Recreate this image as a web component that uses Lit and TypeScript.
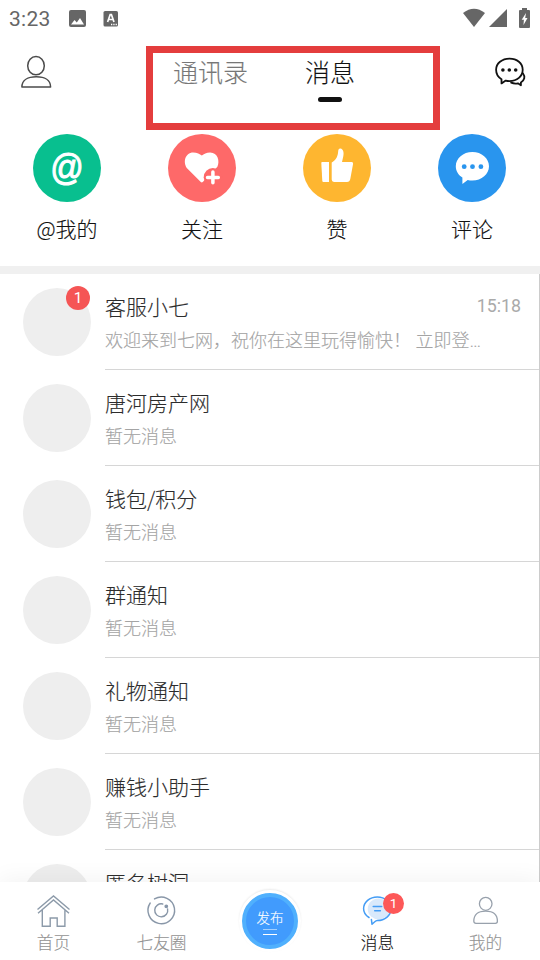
import { LitElement, html, css, svg, nothing } from "lit";
import { customElement, property } from "lit/decorators.js";

interface Conversation {
  name: string;
  preview: string;
  time?: string;
  unread?: number;
}

const conversations: Conversation[] = [
  { name: "客服小七", preview: "欢迎来到七网，祝你在这里玩得愉快！ 立即登…", time: "15:18", unread: 1 },
  { name: "唐河房产网", preview: "暂无消息" },
  { name: "钱包/积分", preview: "暂无消息" },
  { name: "群通知", preview: "暂无消息" },
  { name: "礼物通知", preview: "暂无消息" },
  { name: "赚钱小助手", preview: "暂无消息" },
  { name: "匿名树洞", preview: "暂无消息" },
];

const heartIcon = html`<svg width="68" height="68" viewBox="0 0 68 68">
  <path fill="#fff" d="M32.800 48 19.800 35C14.200 29 17 18.400 25.200 18.400c4 0 6.600 1.400 8.600 3.200 2-1.800 4.600-3.200 8.400-3.200 7.600 0 9.800 8.600 7.200 14.400L34.800 47.900q-1 .9-2 .1z"/>
  <circle cx="44.900" cy="43.300" r="9.200" fill="#fe6969"/>
  <path d="M44.900 38v10.800M39.500 43.400h10.800" stroke="#fff" stroke-width="3.500" stroke-linecap="round"/>
</svg>`;

const thumbIcon = html`<svg width="68" height="68" viewBox="0 0 68 68" fill="#fff">
  <path d="M19 28h7v20h-5.600q-1 0-1.100-1L18.300 29q0-1 .7-1z"/>
  <path d="M28.700 28.600c3.500-2.100 6-5.300 6.400-10.600.1-2.500 1-3.600 2.300-3.400 3 .5 3.700 4.300 2.900 7.700L39 28h9.700q1.600 0 1.400 1.700L47.300 45q-.6 3-3.300 3H31q-2.300-.2-2.300-2.500z"/>
</svg>`;

const commentIcon = html`<svg width="68" height="68" viewBox="0 0 68 68">
  <path fill="#fff" d="M34.400 18c9.300 0 16.600 6.300 16.600 14.200s-7.300 14.300-16.600 14.300c-1.700 0-3.300-.2-4.700-.6L24.400 50.100v-6.500c-4-2.600-6.600-6.700-6.600-11.400C17.800 24.300 25.100 18 34.400 18z"/>
  <g fill="#2995ee"><circle cx="26.200" cy="32.700" r="2.400"/><circle cx="34.500" cy="32.700" r="2.400"/><circle cx="42.900" cy="32.700" r="2.400"/></g>
</svg>`;

const actions = [
  { label: "@我的", tone: "green", icon: html`<span class="at">@</span>` },
  { label: "关注", tone: "red", icon: heartIcon },
  { label: "赞", tone: "amber", icon: thumbIcon },
  { label: "评论", tone: "blue", icon: commentIcon },
];

const homeIcon = svg`<g stroke="#8c9aa9" stroke-width="1.400">
  <path d="M1.500 15.500 17.500 2l16 13.500M2 19.300 17.500 6 33 19.300M6.300 15.800v16.400h7.900v-8.200h7v8.200h7.700V15.800"/></g>`;
const circleIcon = svg`<g stroke="#8997a8" stroke-width="1.400" stroke-linecap="round">
  <path d="M10.500 4.900A13.300 13.300 0 1 1 6.200 9M18.700 10A6.500 6.500 0 1 0 23.600 15"/>
  <circle cx="22.300" cy="12.300" r="1.200" fill="#7890ad"/></g>`;
const messageIcon = svg`<ellipse cx="18.700" cy="14.900" rx="11" ry="10.500" fill="#d9e9fb"/>
  <g stroke="#459df5" stroke-width="1.500" stroke-linecap="round" stroke-linejoin="round">
  <path d="M9 23.500C5.600 21.300 3.600 18.300 3.600 14.700 3.600 8.200 9.700 2.900 17.300 2.900S31 8.200 31 14.700s-6 11.900-13.700 11.900c-1.200 0-2 .7-2.800 1.400l-2.500 2.200-.6-4.700"/>
  <path d="M13.200 12.500h8.500M14.700 16.800h5.700"/></g>`;
const profileIcon = svg`<g stroke="#98a1ac" stroke-width="1.300" stroke-linejoin="round">
  <ellipse cx="17.700" cy="9.800" rx="6.300" ry="6.500"/>
  <path d="M8 29.300h19.400q2 0 2-2c0-6.800-4-10.100-11.800-10.100S5.800 20.500 5.800 27.300q.2 2 2.200 2z"/></g>`;

@customElement("status-bar")
class StatusBar extends LitElement {
  static styles = css`
    :host { display: flex; height: 37px; padding: 0 10px 0 9px; align-items: center; justify-content: space-between; box-sizing: border-box; color: #666; }
    .group { display: flex; align-items: center; }
    .indicators { padding-bottom: 2px; }
    .clock { width: 60px; font: 400 21px/36px Roboto, sans-serif; letter-spacing: .3px; -webkit-text-stroke: 0; }
    svg { display: block; }
    .image { margin-left: -1px; }
    .lang { margin-left: 16px; }
    .signal { margin-left: 4px; }
    .battery { margin-left: 12px; }
  `;
  render() {
    return html`
      <div class="group">
        <span class="clock">3:23</span>
        <svg class="image" width="19" height="18" viewBox="0 0 19 18"><rect x="1" width="17" height="17" rx="2" fill="currentColor"/><path d="M3 14.500 6.500 10l2.300 2.500L12 8l4 6.500z" fill="#fff"/></svg>
        <svg class="lang" width="16" height="18" viewBox="0 0 16 18"><rect x=".5" y="1" width="14.500" height="15.500" rx="1.600" fill="currentColor"/><path d="m4.600 12 2.600-7.500h1.200L11 12M5.500 9.500h4.600" fill="none" stroke="#fff" stroke-width="1.700"/><path d="M8 14.500h1.300m1 0h1.300m1 0h1.300" stroke="#fff" stroke-width="1.300"/></svg>
      </div>
      <div class="group indicators">
        <svg width="22" height="20" viewBox="0 0 22 20"><path d="M0 5Q11-3.500 22 5L11 19z" fill="currentColor"/></svg>
        <svg class="signal" width="18" height="20" viewBox="0 0 18 20"><path d="M18 1v18H0z" fill="currentColor"/></svg>
        <svg class="battery" width="11" height="20" viewBox="0 0 11 20"><path d="M3 0h5v2h2q1 0 1 1v16q0 1-1 1H1q-1 0-1-1V3q0-1 1-1h2z" fill="currentColor"/><path d="M7 5 2.700 11.700h2.200L4.500 17 8.500 10H6.200z" fill="#fff"/></svg>
      </div>`;
  }
}

@customElement("top-bar")
class TopBar extends LitElement {
  static styles = css`
    :host { display: grid; grid-template-columns: 146px 294px 1fr; height: 97px; align-items: start; }
    .user { margin: 18px 0 0 21px; display: block; }
    .chat { margin: 19px 0 0 54px; display: block; }
    .tabs { box-sizing: border-box; height: 83.500px; margin-top: 9px; border: 7px solid #e43d3d; display: flex; gap: 57px; padding: 0 0 0 20px; align-items: flex-start; }
    .tab { font-size: 25px; line-height: 36px; color: #777; display: flex; flex-direction: column; align-items: center; }
    .active { color: #111; }
    .active::after { content: ""; width: 24px; height: 5px; border-radius: 2.500px; background: #111; margin-top: 8px; }
  `;
  render() {
    return html`
      <svg class="user" width="31" height="34" viewBox="0 0 31 34" fill="none" stroke="#4b4b4b" stroke-width="1.500" stroke-linejoin="round">
        <ellipse cx="15" cy="10.700" rx="8.300" ry="9.100"/><path d="M.9 32h28.700c0-6.800-5.900-10.200-14.300-10.200S.9 25.200.9 32z"/>
      </svg>
      <div class="tabs"><span class="tab">通讯录</span><span class="tab active">消息</span></div>
      <svg class="chat" width="32" height="31" viewBox="0 0 32 31" fill="none" stroke="#111" stroke-width="1.800" stroke-linecap="round" stroke-linejoin="round">
        <path d="M7.500 23.200v4.200l4.200-2.800c1.200.4 2.500.5 3.800.5 7.500 0 13.200-4.900 13.200-11.400S23 2.600 15.500 2.600 2.100 7.300 2.100 13.700c0 4.200 2.100 7.400 5.400 9.500z"/>
        <path d="M28.900 17.200c2.600 3.500 1.700 7-2 9.200v2.900l-3-2c-2.900.7-4.800.2-6.800-.6"/>
        <g fill="#111" stroke="none"><circle cx="8.900" cy="14" r="1.800"/><circle cx="15.300" cy="14" r="1.800"/><circle cx="21.700" cy="14" r="1.800"/></g>
      </svg>`;
  }
}

@customElement("quick-actions")
class QuickActions extends LitElement {
  static styles = css`
    :host { display: grid; grid-template-columns: repeat(4, 1fr); height: 140px; box-sizing: border-box; border-bottom: 8px solid #f0f0f0; }
    .action { display: flex; flex-direction: column; align-items: center; padding-right: 1px; font-size: 21px; line-height: 30px; color: #111; gap: 11px; }
    .disc { width: 68px; height: 68px; border-radius: 50%; display: flex; align-items: center; justify-content: center; }
    .green { background: #08bf8f; }
    .red { background: #fe6969; }
    .amber { background: #feb630; }
    .blue { background: #2995ee; }
    .at { font: 400 33px/64px "Liberation Sans", sans-serif; color: #fff; transform: scaleY(1.12); -webkit-text-stroke: .9px currentColor; }
  `;
  render() {
    return html`${actions.map((a) => html`<div class="action"><div class="disc ${a.tone}">${a.icon}</div><span>${a.label}</span></div>`)}`;
  }
}

@customElement("conversation-row")
class ConversationRow extends LitElement {
  @property({ attribute: false }) item!: Conversation;
  static styles = css`
    :host { display: flex; flex: none; height: 96px; padding-left: 23px; gap: 14px; box-sizing: border-box; }
    .avatar { position: relative; flex: none; width: 68px; height: 68px; margin-top: 14px; border-radius: 50%; background: #eee; }
    .badge { position: absolute; top: -2px; right: 1px; width: 24px; height: 24px; border-radius: 50%; background: #f55555; color: #fff; text-align: center; font: 400 15.500px/24px Roboto, sans-serif; -webkit-text-stroke: 0; }
    .body { flex: 1; min-width: 0; border-bottom: 1px solid #d6d6d6; padding: 17px 18px 0 0; }
    .head { display: flex; justify-content: space-between; }
    .name { font-size: 21px; line-height: 30px; color: #2c2c2c; }
    .time { font: 400 17.800px/30px Roboto, sans-serif; color: #aaa; -webkit-text-stroke: 0; }
    .preview { font-family: Roboto, "Noto Sans CJK SC", sans-serif; font-size: 18px; line-height: 26px; margin-top: 7px; color: #a4a4a4; white-space: nowrap; }
  `;
  render() {
    const { name, preview, time, unread } = this.item;
    return html`
      <div class="avatar">${unread ? html`<span class="badge">${unread}</span>` : nothing}</div>
      <div class="body">
        <div class="head"><span class="name">${name}</span>${time ? html`<span class="time">${time}</span>` : nothing}</div>
        <div class="preview">${preview}</div>
      </div>`;
  }
}

@customElement("tab-bar")
class TabBar extends LitElement {
  static styles = css`
    :host { display: grid; grid-template-columns: repeat(5, 1fr); height: 78px; background: #fff; position: relative; box-shadow: 0 -3px 22px rgba(0, 0, 0, .05); }
    .item { display: flex; flex-direction: column; align-items: center; padding-top: 12px; font-size: 16.700px; line-height: 24px; color: #929292; }
    .active { color: #111; }
    .icon { position: relative; height: 36px; width: 36px; }
    .icon svg { display: block; }
    .label { margin-right: 1px; }
    .badge { position: absolute; left: 23px; top: -1px; width: 21px; height: 21px; border-radius: 50%; background: #fd5858; color: #fff; font: 400 13.500px/21px Roboto, sans-serif; text-align: center; -webkit-text-stroke: 0; }
    .publish { box-sizing: border-box; width: 56px; height: 56px; margin: 11px auto 0; border: 4.500px solid #50b0fd; border-radius: 50%; background: #419bfd; box-shadow: 0 0 0 3px #fff, 0 -1px 2px 3px rgba(0, 0, 0, .08); color: #fff; display: flex; flex-direction: column; align-items: center; font-size: 13.500px; line-height: 20px; padding-top: 10px; }
    .lines { width: 14px; height: 6px; box-sizing: border-box; border-top: 1.500px solid #a3cffe; border-bottom: 1px solid #fff; margin-top: 2px; }
  `;
  private tab(label: string, icon: unknown, active = false) {
    return html`<div class="item ${active ? "active" : ""}">
      <div class="icon"><svg width="36" height="36" viewBox="0 0 36 36" fill="none">${icon}</svg>${active ? html`<span class="badge">1</span>` : nothing}</div>
      <span class="label">${label}</span>
    </div>`;
  }
  render() {
    return html`
      ${this.tab("首页", homeIcon)}
      ${this.tab("七友圈", circleIcon)}
      <div class="publish"><span>发布</span><i class="lines"></i></div>
      ${this.tab("消息", messageIcon, true)}
      ${this.tab("我的", profileIcon)}`;
  }
}

@customElement("app-root")
class AppRoot extends LitElement {
  static styles = css`
    :host { display: flex; flex-direction: column; width: 540px; height: 960px; overflow: hidden; background: #fff; font-family: "Noto Sans CJK SC", sans-serif; font-weight: 300; -webkit-text-stroke: .12px currentColor; }
    .list { flex: 1; min-height: 0; overflow: hidden; display: flex; flex-direction: column; border-right: 1px solid #ccc; }
  `;
  render() {
    return html`
      <status-bar></status-bar>
      <top-bar></top-bar>
      <quick-actions></quick-actions>
      <div class="list">${conversations.map((c) => html`<conversation-row .item=${c}></conversation-row>`)}</div>
      <tab-bar></tab-bar>`;
  }
}
